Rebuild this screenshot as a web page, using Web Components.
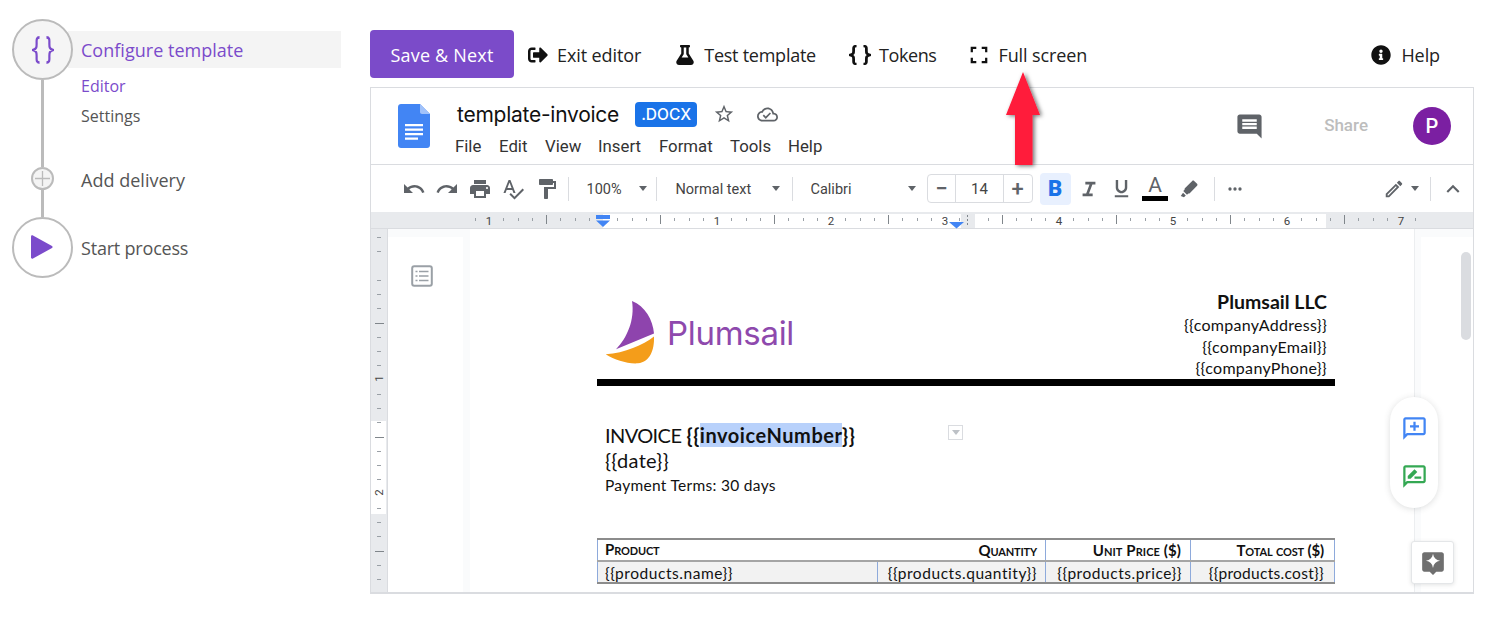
<!DOCTYPE html>
<html lang="en">
<head>
<meta charset="utf-8">
<title>Configure template</title>
<style>
  html, body { margin: 0; padding: 0; background: #fff; }
  body { width: 1500px; height: 623px; overflow: hidden; font-family: "Open Sans", "Liberation Sans", sans-serif; }
</style>
</head>
<body>
<app-shell>
  <flow-stepper slot="side">
    <flow-step kind="braces" size="big" active>
      <span slot="title">Configure template</span>
      <sub-link active>Editor</sub-link>
      <sub-link>Settings</sub-link>
    </flow-step>
    <flow-step kind="plus" size="small"><span slot="title">Add delivery</span></flow-step>
    <flow-step kind="play" size="big" last><span slot="title">Start process</span></flow-step>
  </flow-stepper>

  <top-bar slot="main">
    <save-button>Save &amp; Next</save-button>
    <tool-link icon="exit" style="margin-left:14px">Exit editor</tool-link>
    <tool-link icon="flask" style="margin-left:35px">Test template</tool-link>
    <tool-link icon="braces" style="margin-left:33px">Tokens</tool-link>
    <tool-link icon="full" style="margin-left:34px">Full screen</tool-link>
    <tool-link icon="info" style="margin-left:auto;margin-right:34px">Help</tool-link>
  </top-bar>

  <doc-frame slot="main">
    <doc-header slot="header"></doc-header>
    <doc-toolbar slot="toolbar"></doc-toolbar>
    <h-ruler slot="ruler"></h-ruler>
    <invoice-page slot="page"></invoice-page>
  </doc-frame>
</app-shell>
<red-arrow></red-arrow>

<script>
const ICONS = {
  exit: ['0 0 512 512', 'M497 273L329 441c-15 15-41 4.5-41-17v-96H152c-13.3 0-24-10.7-24-24v-96c0-13.3 10.7-24 24-24h136V88c0-21.4 25.9-32 41-17l168 168c9.3 9.4 9.3 24.6 0 34zM192 436v-40c0-6.6-5.4-12-12-12H96c-17.7 0-32-14.3-32-32V160c0-17.7 14.3-32 32-32h84c6.6 0 12-5.4 12-12V76c0-6.6-5.4-12-12-12H96c-53 0-96 43-96 96v192c0 53 43 96 96 96h84c6.6 0 12-5.4 12-12z'],
  flask: ['0 0 448 512', 'M437.2 403.5L320 215V64h8c13.3 0 24-10.7 24-24V24c0-13.3-10.7-24-24-24H120c-13.3 0-24 10.7-24 24v16c0 13.3 10.7 24 24 24h8v151L10.8 403.5C-18.5 450.6 15.3 512 70.9 512h306.2c55.7 0 89.4-61.5 60.1-108.5zM137.9 320l48.2-77.6c3.7-5.2 5.8-11.6 5.8-18.4V64h64v160c0 6.9 2.2 13.2 5.8 18.4l48.2 77.6h-172z'],
  info: ['0 0 512 512', 'M256 8C119.043 8 8 119.083 8 256c0 136.997 111.043 248 248 248s248-111.003 248-248C504 119.083 392.957 8 256 8zm0 110c23.196 0 42 18.804 42 42s-18.804 42-42 42-42-18.804-42-42 18.804-42 42-42zm56 254c0 6.627-5.373 12-12 12h-88c-6.627 0-12-5.373-12-12v-24c0-6.627 5.373-12 12-12h12v-64h-12c-6.627 0-12-5.373-12-12v-24c0-6.627 5.373-12 12-12h64c6.627 0 12 5.373 12 12v100h12c6.627 0 12 5.373 12 12v24z'],
  undo: ['0 0 24 24', 'M12.5 8c-2.65 0-5.05.99-6.9 2.6L2 7v9h9l-3.62-3.62c1.39-1.16 3.16-1.88 5.12-1.88 3.54 0 6.55 2.31 7.6 5.5l2.37-.78C21.08 11.03 17.15 8 12.5 8z'],
  redo: ['0 0 24 24', 'M18.4 10.6C16.55 8.99 14.15 8 11.5 8c-4.65 0-8.58 3.03-9.96 7.22L3.9 16c1.05-3.19 4.05-5.5 7.6-5.5 1.95 0 3.73.72 5.12 1.88L13 16h9V7l-3.6 3.6z'],
  print: ['0 0 24 24', 'M19 8H5c-1.66 0-3 1.34-3 3v6h4v4h12v-4h4v-6c0-1.66-1.34-3-3-3zm-3 11H8v-5h8v5zm3-7c-.55 0-1-.45-1-1s.45-1 1-1 1 .45 1 1-.45 1-1 1zm-1-9H6v4h12V3z'],
  spell: ['0 0 24 24', 'M12.45 16h2.09L9.43 3H7.57L2.46 16h2.09l1.12-3h5.64l1.14 3zm-6.02-5L8.5 5.48 10.57 11H6.43zm15.16.59l-8.09 8.09L9.83 16l-1.41 1.41 5.09 5.09L23 13l-1.41-1.41z'],
  paint: ['0 0 24 24', 'M18 4V3c0-.55-.45-1-1-1H5c-.55 0-1 .45-1 1v4c0 .55.45 1 1 1h12c.55 0 1-.45 1-1V6h1v4H9v11c0 .55.45 1 1 1h2c.55 0 1-.45 1-1v-9h8V4h-3z'],
  italic: ['0 0 24 24', 'M8 4v3h4.6L8.9 17H5v3h11v-3h-4l3.7-10H19V4z'],
  underline: ['0 0 24 24', 'M12 17c3.3 0 6-2.7 6-6V3h-2.5v8c0 1.9-1.6 3.5-3.5 3.5S8.500 12.900 8.500 11V3H6v8c0 3.300 2.700 6 6 6zM5 19v2h14v-2H5z'],
  marker: ['0 0 24 24', 'M20.800 6.400l-3.200-3.200c-.600-.600-1.500-.600-2.100 0L7.500 11.200c-.400.400-.500 1-.300 1.500l-1.500 1.500 4.100 4.100 1.500-1.500c.500.200 1.100.100 1.500-.300l8-8c.600-.600.600-1.500 0-2.100zM3 19.500l3.500 1.500 2-2-3-3z'],
  more: ['0 0 24 24', 'M6 10a2 2 0 1 0 0 4 2 2 0 0 0 0-4zm12 0a2 2 0 1 0 0 4 2 2 0 0 0 0-4zm-6 0a2 2 0 1 0 0 4 2 2 0 0 0 0-4z'],
  pencil: ['0 0 24 24', 'M3 17.250V21h3.750L17.810 9.940l-3.750-3.750L3 17.250zM5.920 19H5v-.920l9.060-9.060.920.920L5.920 19zM20.710 5.630l-2.340-2.340c-.200-.200-.450-.290-.710-.290s-.510.100-.700.290l-1.830 1.830 3.750 3.750 1.830-1.830c.390-.390.390-1.020 0-1.410z'],
  up: ['0 0 24 24', 'M12 8l-6 6 1.410 1.410L12 10.830l4.590 4.580L18 14z'],
  comment: ['0 0 24 24', 'M21.990 4c0-1.100-.890-2-1.990-2H4c-1.100 0-2 .900-2 2v12c0 1.100.900 2 2 2h14l4 4-.010-18zM18 14H6v-2h12v2zm0-3H6V9h12v2zm0-3H6V6h12v2z'],
  star: ['0 0 24 24', 'M22 9.240l-7.190-.620L12 2 9.190 8.630 2 9.240l5.460 4.730L5.820 21 12 17.270 18.180 21l-1.630-7.030L22 9.240zM12 15.400l-3.760 2.270 1-4.280-3.320-2.880 4.380-.380L12 6.100l1.710 4.040 4.380.380-3.320 2.880 1 4.280L12 15.400z'],
  cloud: ['0 0 24 24', 'M19.350 10.040C18.670 6.590 15.640 4 12 4 9.110 4 6.600 5.640 5.350 8.040 2.340 8.360 0 10.910 0 14c0 3.310 2.690 6 6 6h13c2.760 0 5-2.240 5-5 0-2.640-2.050-4.780-4.650-4.960zM19 18H6c-2.210 0-4-1.790-4-4 0-2.050 1.530-3.760 3.560-3.970l1.070-.110.500-.950C8.080 7.140 9.940 6 12 6c2.620 0 4.880 1.860 5.390 4.430l.300 1.500 1.530.110c1.560.100 2.780 1.410 2.780 2.960 0 1.650-1.350 3-3 3zm-9-3.820l-2.090-2.090L6.500 13.500 10 17l6.010-6.010-1.410-1.410z'],
  addcomment: ['0 0 24 24', 'M20 2H4c-1.100 0-2 .900-2 2v18l4-4h14c1.100 0 2-.900 2-2V4c0-1.100-.900-2-2-2zm0 14H5.170L4 17.170V4h16v12zm-9-2h2v-3h3V9h-3V6h-2v3H8v2h3z'],
  review: ['0 0 24 24', 'M20 2H4c-1.100 0-2 .900-2 2v18l4-4h14c1.100 0 2-.900 2-2V4c0-1.100-.900-2-2-2zm0 14H5.170L4 17.170V4h16v12zM6 14h2.500l6-6L12 5.500l-6 6V14zm6 0h6v-2h-6v2z'],
  spark: ['0 0 24 24', 'M20 2H4c-1.100 0-2 .900-2 2v14c0 1.100.900 2 2 2h5l3 3 3-3h5c1.100 0 2-.900 2-2V4c0-1.100-.900-2-2-2zm-8 14.500c-.600-3.700-2.800-5.900-6.500-6.500 3.700-.600 5.900-2.800 6.500-6.500.600 3.700 2.800 5.900 6.500 6.500-3.700.600-5.900 2.800-6.500 6.500z']
};

// stroked icons: the same shape is used in the stepper and in the top bar
const STROKED = {
  braces: ['2.500 2 19 20', 'M9 3C6 3 6.500 5 6.500 7.500S6.500 11 3.500 12c3 1 3 2 3 4.500S6 21 9 21M15 3c3 0 2.500 2 2.500 4.500s0 3.500 3 4.500c-3 1-3 2-3 4.500S18 21 15 21'],
  full: ['0 0 20 20', 'M2 7V2h5M13 2h5v5M18 13v5h-5M7 18H2v-5']
};

class UiIcon extends HTMLElement {
  connectedCallback() {
    const name = this.getAttribute('name');
    const w = this.getAttribute('w') || 24;
    const h = this.getAttribute('h') || w;
    const sw = this.getAttribute('sw') || 2.500;
    const root = this.attachShadow({mode: 'open'});
    let inner, box, fit = '';
    if (STROKED[name]) {
      box = STROKED[name][0];
      fit = 'preserveAspectRatio="none"';
      inner = `<path d="${STROKED[name][1]}" fill="none" stroke="currentColor" stroke-width="${sw}"/>`;
    } else {
      box = ICONS[name][0];
      inner = `<path d="${ICONS[name][1]}" fill="currentColor"/>`;
    }
    root.innerHTML = `<style>:host{display:inline-flex;flex:none;line-height:0}</style>
      <svg width="${w}" height="${h}" viewBox="${box}" ${fit}>${inner}</svg>`;
  }
}
customElements.define('ui-icon', UiIcon);

class AppShell extends HTMLElement {
  constructor() {
    super();
    this.attachShadow({mode: 'open'}).innerHTML = `<style>
      :host { display: flex; width: 1500px; height: 623px; box-sizing: border-box; }
      .side { width: 370px; flex: none; padding: 19px 0 0 12px; box-sizing: border-box; }
      .main { width: 1104px; flex: none; padding-top: 30px; display: flex; flex-direction: column; }
    </style>
    <div class="side"><slot name="side"></slot></div>
    <div class="main"><slot name="main"></slot></div>`;
  }
}
customElements.define('app-shell', AppShell);

class FlowStepper extends HTMLElement {
  constructor() {
    super();
    this.attachShadow({mode: 'open'}).innerHTML = `<style>
      :host { display: flex; flex-direction: column; width: 329px; color: #555; }
    </style><slot></slot>`;
  }
}
customElements.define('flow-stepper', FlowStepper);

class FlowStep extends HTMLElement {
  connectedCallback() {
    const kind = this.getAttribute('kind');
    const big = this.getAttribute('size') === 'big';
    const glyph = {
      braces: '<ui-icon name="braces" w="22" h="28" sw="1.900" style="color:#7b4bcb"></ui-icon>',
      play: '<svg width="26" height="28" viewBox="0 0 26 28" style="margin:-2px 3px 0 0"><path d="M3 3.500v21c0 1 1 1.500 2 1l19-10.500c.800-.500.800-1.500 0-2L5 2.500c-1-.500-2 0-2 1z" fill="#7b4bcb"/></svg>',
      plus: '<svg width="15" height="15" viewBox="0 0 15 15"><path d="M7.500 0v15M0 7.500h15" stroke="#bbb" stroke-width="1.300"/></svg>'
    }[kind];
    this.attachShadow({mode: 'open'}).innerHTML = `<style>
      :host { display: grid; grid-template-columns: 61px 1fr; }
      :host([active]) { height: 148px; }
      :host([kind=plus]) { height: 50px; }
      .rail { display: flex; flex-direction: column; align-items: center; }
      .node { flex: none; box-sizing: border-box; border-radius: 50%; border: 2.500px solid #bbb;
        display: flex; align-items: center; justify-content: center; background: #fff; position: relative; z-index: 1; }
      .big { width: 61px; height: 61px; }
      .small { width: 23px; height: 23px; border-width: 2px; background: #f4f4f4; }
      :host([active]) .node { background: #f5f5f5; }
      .line { flex: 1; width: 2.500px; background: #bbb; }
      :host([last]) .line { display: none; }
      .body { min-width: 0; }
      .title { display: flex; align-items: center; font-size: 18px; color: #555; padding-left: 8px; }
      :host([active]) .title { margin: 12px 0 0 -5px; padding-left: 13px; height: 37px; background: #f4f4f4; color: #7b4bcb; letter-spacing: .02px; }
      :host([kind=plus]) .title { height: 25px; margin-top: 0; letter-spacing: .02px; }
      :host([last]) .title { height: 61px; letter-spacing: -.2px; }
      .subs { padding: 3px 0 0 8px; display: flex; flex-direction: column; }
    </style>
    <div class="rail"><div class="node ${big ? 'big' : 'small'}">${glyph}</div><div class="line"></div></div>
    <div class="body">
      <div class="title"><slot name="title"></slot></div>
      <div class="subs"><slot></slot></div>
    </div>`;
  }
}
customElements.define('flow-step', FlowStep);

class SubLink extends HTMLElement {
  constructor() {
    super();
    this.attachShadow({mode: 'open'}).innerHTML = `<style>
      :host { display: block; height: 30px; line-height: 30px; font-size: 16px; color: #555; }
      :host([active]) { color: #7b4bcb; }
    </style><slot></slot>`;
  }
}
customElements.define('sub-link', SubLink);

class TopBar extends HTMLElement {
  constructor() {
    super();
    this.attachShadow({mode: 'open'}).innerHTML = `<style>
      :host { display: flex; align-items: center; height: 48px; margin-bottom: 9px; }
    </style><slot></slot>`;
  }
}
customElements.define('top-bar', TopBar);

class SaveButton extends HTMLElement {
  constructor() {
    super();
    this.attachShadow({mode: 'open'}).innerHTML = `<style>
      :host { display: flex; align-items: center; justify-content: center; box-sizing: border-box; width: 144px; height: 48px;
        padding-top: 1px; border-radius: 4px; background: #7b4bc9; color: #fff; font-size: 18px; letter-spacing: .2px; }
    </style><slot></slot>`;
  }
}
customElements.define('save-button', SaveButton);

class ToolLink extends HTMLElement {
  connectedCallback() {
    const icon = this.getAttribute('icon');
    const w = {braces: 22, flask: 18, full: 18}[icon] || 20;
    const h = icon === 'full' ? 18 : 20;
    const gap = {braces: 8, exit: 9}[icon] || 10;
    const sp = {flask: -.25, braces: -.4}[icon] || -.1;
    this.attachShadow({mode: 'open'}).innerHTML = `<style>
      :host { display: flex; align-items: center; gap: ${gap}px; font-size: 18px; letter-spacing: ${sp}px; color: #222; padding-top: 1px; }
      ui-icon { color: #111; }
    </style><ui-icon name="${icon}" w="${w}" h="${h}" sw="${icon === 'braces' ? 2.400 : 2.500}"></ui-icon><slot></slot>`;
  }
}
customElements.define('tool-link', ToolLink);

class DocFrame extends HTMLElement {
  constructor() {
    super();
    this.attachShadow({mode: 'open'}).innerHTML = `<style>
      :host { display: flex; flex-direction: column; box-sizing: border-box; height: 507px;
        border: 1px solid #dadce0; border-bottom-width: 2px; background: #fff; overflow: hidden;
        font-family: Roboto, "Liberation Sans", sans-serif; }
    </style>
    <slot name="header"></slot><slot name="toolbar"></slot><slot name="ruler"></slot><slot name="page"></slot>`;
  }
}
customElements.define('doc-frame', DocFrame);

class DocHeader extends HTMLElement {
  constructor() {
    super();
    this.attachShadow({mode: 'open'}).innerHTML = `<style>
      :host { display: flex; align-items: center; height: 76px; box-sizing: content-box;
        border-bottom: 1px solid #dadce0; padding-left: 27px; }
      .titles { margin-left: 27px; padding-top: 6px; }
      .row { display: flex; align-items: center; height: 28px; }
      .name { font: 400 21px Inter, "Open Sans", sans-serif; letter-spacing: -.25px; color: #111; margin-right: 16px; }
      .chip { width: 62px; height: 25px; border-radius: 4px; background: #1a73e8; color: #fff; margin-top: 1px;
        font: 500 15.500px Inter, Roboto, sans-serif; display: flex; align-items: center; justify-content: center; }
      .row ui-icon { color: #5f6368; }
      .menu { display: flex; font-size: 16.800px; color: #333; margin: 6px 0 0 -2px; height: 24px; line-height: 24px; }
      .right { margin-left: auto; display: flex; align-items: center; padding-right: 22px; color: #5f6368; }
      .share { font-weight: 500; font-size: 17px; color: #bdbdbd; margin: -2px 45px 0 60px; }
      .avatar { width: 38px; height: 38px; border-radius: 50%; background: #7b1fa2; color: #fff; font-size: 20px; font-weight: 500;
        display: flex; align-items: center; justify-content: center; }
    </style>
    <svg width="32" height="44" viewBox="0 0 32 44">
      <path d="M3 0h19l10 10v31c0 1.700-1.300 3-3 3H3c-1.700 0-3-1.300-3-3V3c0-1.700 1.300-3 3-3z" fill="#4285f4"/>
      <path d="M22 0l10 10h-8c-1.100 0-2-.900-2-2z" fill="#a1c2fa"/>
      <path d="M7 20h18v2.200H7zM7 24.500h18v2.200H7zM7 29h18v2.200H7zM7 33.500h13v2.200H7z" fill="#fff"/>
    </svg>
    <div class="titles">
      <div class="row">
        <span class="name">template-invoice</span><span class="chip">.DOCX</span>
        <ui-icon name="star" w="22" style="margin-left:16px"></ui-icon>
        <ui-icon name="cloud" w="21" style="margin-left:22px"></ui-icon>
      </div>
      <div class="menu">
        <span style="width:44px">File</span><span style="width:46px">Edit</span><span style="width:53px">View</span><span style="width:61px">Insert</span><span style="width:71px">Format</span><span style="width:58px">Tools</span><span>Help</span>
      </div>
    </div>
    <div class="right">
      <ui-icon name="comment" w="29"></ui-icon>
      <span class="share">Share</span>
      <div class="avatar">P</div>
    </div>`;
  }
}
customElements.define('doc-header', DocHeader);

class ToolBtn extends HTMLElement {
  connectedCallback() {
    const w = this.getAttribute('w') || 33;
    this.attachShadow({mode: 'open'}).innerHTML = `<style>
      :host { display: flex; align-items: center; justify-content: center; width: ${w}px; height: 32px; flex: none; color: #5f6368; font-size: 16px; }
      :host([on]) { background: #e8f0fe; color: #1a73e8; border-radius: 4px; font-weight: 900; font-size: 22px; }
    </style><slot></slot>`;
  }
}
customElements.define('tool-btn', ToolBtn);

class ToolSelect extends HTMLElement {
  connectedCallback() {
    const w = this.getAttribute('w');
    this.attachShadow({mode: 'open'}).innerHTML = `<style>
      :host { display: flex; align-items: center; justify-content: space-between; width: ${w}px; flex: none; font-size: 14.500px; color: #444; }
      span { padding-top: 1px; }
      i { width: 0; height: 0; border: 4.500px solid transparent; border-top: 5px solid #5f6368; border-bottom: 0; }
    </style><span><slot></slot></span><i></i>`;
  }
}
customElements.define('tool-select', ToolSelect);

class ToolSep extends HTMLElement {
  constructor() {
    super();
    this.attachShadow({mode: 'open'}).innerHTML = `<style>
      :host { display: block; width: 1px; height: 24px; flex: none; background: #dadce0; }
    </style>`;
  }
}
customElements.define('tool-sep', ToolSep);

class DocToolbar extends HTMLElement {
  constructor() {
    super();
    this.attachShadow({mode: 'open'}).innerHTML = `<style>
      :host { display: flex; align-items: center; height: 47px; padding-left: 26.500px; color: #5f6368; }
      .size { display: flex; box-sizing: border-box; width: 106px; height: 29px; border: 1px solid #dadce0; border-radius: 4px;
        margin: 0 7px 0 11px; flex: none; align-items: center; font-size: 15px; color: #444; }
      .size span { display: flex; align-items: center; justify-content: center; height: 100%; box-sizing: border-box; }
      .size .b { width: 28px; font-size: 22px; font-weight: 500; color: #5f6368; }
      .size .n { width: 49px; border-left: 1px solid #dadce0; border-right: 1px solid #dadce0; }
      .color { flex-direction: column; gap: 0; font-size: 21px; }
      .color b { display: block; width: 26px; height: 5px; background: #000; margin-top: 1px; }
      .color span { line-height: 19px; }
    </style>
    <tool-btn><ui-icon name="undo" w="24"></ui-icon></tool-btn>
    <tool-btn><ui-icon name="redo" w="24"></ui-icon></tool-btn>
    <tool-btn><ui-icon name="print" w="24"></ui-icon></tool-btn>
    <tool-btn><ui-icon name="spell" w="24"></ui-icon></tool-btn>
    <tool-btn style="margin-left:.500px"><ui-icon name="paint" w="24"></ui-icon></tool-btn>
    <tool-sep style="margin:0 18px 0 4.500px"></tool-sep>
    <tool-select w="60">100%</tool-select>
    <tool-sep style="margin:0 19px 0 9px"></tool-sep>
    <tool-select w="104">Normal text</tool-select>
    <tool-sep style="margin:0 18px 0 12px"></tool-sep>
    <tool-select w="105">Calibri</tool-select>
    <div class="size"><span class="b">&minus;</span><span class="n">14</span><span class="b">+</span></div>
    <tool-btn w="31" on>B</tool-btn>
    <tool-btn style="margin-left:1.500px"><ui-icon name="italic" w="22"></ui-icon></tool-btn>
    <tool-btn><ui-icon name="underline" w="23"></ui-icon></tool-btn>
    <tool-btn w="34" class="color"><span>A</span><b></b></tool-btn>
    <tool-btn><ui-icon name="marker" w="22"></ui-icon></tool-btn>
    <tool-sep style="margin:0 4px 0 8.500px"></tool-sep>
    <tool-btn><ui-icon name="more" w="20"></ui-icon></tool-btn>
    <tool-btn style="margin-left:auto" w="26"><ui-icon name="pencil" w="22"></ui-icon></tool-btn>
    <tool-select w="9" style="margin:0 11px 0 3px"></tool-select>
    <tool-sep style="margin-right:5px"></tool-sep>
    <tool-btn w="34" style="margin-right:3px"><ui-icon name="up" w="26"></ui-icon></tool-btn>`;
  }
}
customElements.define('doc-toolbar', DocToolbar);

// ruler: x is a page coordinate minus 371, one inch is 114px, 1/8 inch a tick
class HRuler extends HTMLElement {
  connectedCallback() {
    const zero = 232;
    let marks = '';
    for (let i = -13; i <= 63; i++) {
      const x = zero + i * 14.250;
      if (x < 100 || x > 1045) continue;
      if (i % 8 === 0) {
        if (i !== 0) marks += `<text x="${x}" y="12.500" text-anchor="middle" font-size="11.500" fill="#444">${Math.abs(i / 8)}</text>`;
      } else if (((i % 8) + 8) % 8 === 4) {
        marks += `<rect x="${Math.round(x)}" y="3" width="1" height="9" fill="#80868b"/>`;
      } else {
        marks += `<rect x="${Math.round(x)}" y="6" width="1" height="3" fill="#9aa0a6"/>`;
      }
    }
    this.attachShadow({mode: 'open'}).innerHTML = `<style>
      :host { display: block; height: 17px; flex: none; font-family: Roboto, sans-serif; line-height: 0; }
    </style>
    <svg width="1102" height="17" viewBox="0 0 1102 17">
      <rect width="1102" height="17" fill="#e8eaed"/>
      <rect x="232" y="2" width="723" height="14" fill="#fff"/>
      <rect y="0" width="1102" height="1" fill="#e8eaed"/>
      <rect y="16" width="1102" height="1" fill="#dadce0"/>
      ${marks}
      <rect x="590" y="2" width="14" height="14" fill="#e8eaed"/>
      <rect x="225" y="3" width="14" height="4" fill="#4285f4"/>
      <path d="M225 8.500h14l-7 6.500z" fill="#4285f4"/>
      <path d="M578 10h15l-7.500 6.500z" fill="#4285f4"/>
      <path d="M596.500 3v11" stroke="#80868b" stroke-dasharray="2 2"/>
    </svg>`;
  }
}
customElements.define('h-ruler', HRuler);

class VRuler extends HTMLElement {
  connectedCallback() {
    let marks = '';
    for (let i = 0; i <= 24; i++) {
      const y = 8 + i * 14.250;
      if (i === 2) continue;
      if (i % 8 === 2) {
        const n = (i - 2) / 8;
        marks += `<text transform="translate(12 ${y - 1}) rotate(-90)" text-anchor="middle" font-size="11.500" fill="#444">${n}</text>`;
      } else if (i % 8 === 6) {
        marks += `<rect x="4" y="${Math.round(y)}" width="9" height="1" fill="#80868b"/>`;
      } else {
        marks += `<rect x="6" y="${Math.round(y)}" width="4" height="1" fill="#9aa0a6"/>`;
      }
    }
    this.attachShadow({mode: 'open'}).innerHTML = `<style>
      :host { display: block; width: 17px; flex: none; font-family: Roboto, sans-serif; line-height: 0; }
    </style>
    <svg width="17" height="364" viewBox="0 0 17 364">
      <rect width="17" height="364" fill="#e8eaed"/>
      <rect y="192" width="15" height="93" fill="#fff"/>
      <rect x="16" width="1" height="364" fill="#dadce0"/>
      ${marks}
    </svg>`;
  }
}
customElements.define('v-ruler', VRuler);

class InvoiceTable extends HTMLElement {
  constructor() {
    super();
    this.attachShadow({mode: 'open'}).innerHTML = `<style>
      :host { display: block; width: 738px; font-family: Lato, "Open Sans", sans-serif; color: #111; }
      table { border-collapse: collapse; width: 737px; table-layout: fixed; }
      td, th { height: 22px; padding: 0 8px 0 7px; text-align: right; white-space: nowrap; box-sizing: border-box;
        border-left: 1px solid #8eaadb; border-right: 1px solid #8eaadb; }
      th { font-variant: small-caps; font-size: 15px; letter-spacing: -.15px; border-top: 2px solid #8c8c8c; border-bottom: 2px solid #a5a5a5; }
      td { background: #f2f2f2; border-bottom: 2px solid #8c8c8c; font-size: 15.500px; letter-spacing: .55px; padding-top: 1px; }
      .l { text-align: left; }
      .in { border-left: 1px solid #a5a5a5; border-right: 1px solid #8eaadb; }
      .q { text-align: right; float: right; }
      th span.q { line-height: 20px; }
      .u { padding-right: 9px; letter-spacing: .1px; }
      .t { padding-right: 10px; }
    </style>
    <table>
      <colgroup><col style="width:280px"><col style="width:168px"><col style="width:145px"><col style="width:144px"></colgroup>
      <tr><th colspan="2" class="l">Product<span class="q">Quantity</span></th><th class="u">Unit Price ($)</th><th class="t">Total cost ($)</th></tr>
      <tr><td class="l">{{products.name}}</td><td class="in">{{products.quantity}}</td><td>{{products.price}}</td><td class="t" style="letter-spacing:.3px">{{products.cost}}</td></tr>
    </table>`;
  }
}
customElements.define('invoice-table', InvoiceTable);

class InvoicePage extends HTMLElement {
  constructor() {
    super();
    this.attachShadow({mode: 'open'}).innerHTML = `<style>
      :host { display: flex; flex: 1; min-height: 0; position: relative; overflow: hidden; }
      .gutter { width: 82px; flex: none; box-sizing: border-box; background: #fafbfc; padding: 8px 7px 0 0; }
      .gutter-in { height: 100%; background: #fff; display: flex; justify-content: center; padding: 28px 8px 0 0; box-sizing: border-box; }
      .paper { width: 944px; flex: none; box-sizing: border-box; padding: 60px 79px 0 127px; background: #fff;
        font-family: Lato, "Open Sans", sans-serif; color: #111; }
      .right { flex: 1; box-sizing: border-box; border-left: 1px solid #eceef0; background: #fafbfc; padding: 8px 0 0 6px; }
      .right-in { height: 100%; background: #fff; padding: 15px 3px 0 40px; box-sizing: border-box; }
      .thumb { width: 10px; height: 88px; border-radius: 5px; background: #dadce0; }
      .head { display: flex; justify-content: space-between; height: 90px; padding: 0 8px 0 9px; }
      .logo { display: flex; align-items: flex-start; padding-top: 11px; margin-left: -1px; }
      .brand { font: 400 33px Inter, Lato, sans-serif; color: #8e49ad; margin: 13px 0 0 12px; letter-spacing: -.3px; }
      .co { text-align: right; font-size: 16px; letter-spacing: .3px; line-height: 21.500px; padding-top: 1px; }
      .co b { display: block; font-size: 19.500px; line-height: 24px; letter-spacing: 0; }
      .rule { height: 7px; background: #000; }
      .inv { padding: 36px 0 0 8px; position: relative; }
      .l1 { font-size: 20px; line-height: 26px; }
      .l1 .w { letter-spacing: -.6px; }
      .l1 b { letter-spacing: .55px; }
      .l2 { font-size: 20px; line-height: 25px; letter-spacing: .3px; }
      .l3 { font-size: 15.500px; line-height: 22px; letter-spacing: .3px; padding-top: 1px; }
      mark { background: #b8d1fb; color: inherit; }
      invoice-table { margin-top: 42px; }
      .drop { position: absolute; left: 351px; top: 39px; box-sizing: border-box; width: 15px; height: 15px; border: 1px solid #dadce0;
        display: flex; align-items: center; justify-content: center; }
      .drop i { width: 0; height: 0; border: 4.500px solid transparent; border-top: 5px solid #bdc1c6; border-bottom: 0; }
      .pill { position: absolute; left: 1019px; top: 168px; width: 48px; height: 111px; border-radius: 24px; background: #fff;
        box-shadow: 0 1px 6px rgba(60,64,67,.18); display: flex; flex-direction: column; align-items: center; justify-content: center; gap: 21px; }
      .fab { position: absolute; left: 1040px; top: 312px; box-sizing: border-box; width: 43px; height: 43px; border-radius: 3px; background: #fff;
        border: 1px solid #e4e6e8; box-shadow: 0 1px 4px rgba(60,64,67,.15); display: flex; align-items: center; justify-content: center; color: #6f6f6f; }
    </style>
    <v-ruler></v-ruler>
    <div class="gutter"><div class="gutter-in"><svg width="22" height="22" viewBox="0 0 22 22">
      <rect x="1.200" y="1.200" width="19.600" height="19.600" rx="2" fill="none" stroke="#9aa0a6" stroke-width="2"/>
      <path d="M4.500 6.500h2M8 6.500h9.500M4.500 11h2M8 11h9.500M4.500 15.500h2M8 15.500h9.500" stroke="#9aa0a6" stroke-width="1.600"/>
    </svg></div></div>
    <div class="paper">
      <div class="head">
        <div class="logo">
          <svg width="50" height="65" viewBox="0 0 50 65">
            <path d="M27 1C40 6 48 20 49 33.500L11 49.300C22 38 30 20 27 1z" fill="#8e44ad"/>
            <path d="M.7 54.300C20 53 38 45 49 36.500 49.500 50 45 62 33 63.300 22 64 10 60 .7 54.300z" fill="#f49d1a"/>
          </svg>
          <span class="brand">Plumsail</span>
        </div>
        <div class="co"><b>Plumsail LLC</b>{{companyAddress}}<br>{{companyEmail}}<br>{{companyPhone}}</div>
      </div>
      <div class="rule"></div>
      <div class="inv">
        <div class="l1"><span class="w">INVOICE</span> <b>{{<mark>invoiceNumber</mark>}}</b></div>
        <div class="l2">{{date}}</div>
        <div class="l3">Payment Terms: 30 days</div>
        <div class="drop"><i></i></div>
      </div>
      <invoice-table></invoice-table>
    </div>
    <div class="right"><div class="right-in"><div class="thumb"></div></div></div>
    <div class="pill">
      <ui-icon name="addcomment" w="27" style="color:#4285f4"></ui-icon>
      <ui-icon name="review" w="27" style="color:#34a853"></ui-icon>
    </div>
    <div class="fab"><ui-icon name="spark" w="26"></ui-icon></div>`;
  }
}
customElements.define('invoice-page', InvoicePage);

class RedArrow extends HTMLElement {
  constructor() {
    super();
    this.attachShadow({mode: 'open'}).innerHTML = `<style>
      :host { position: absolute; left: 1000px; top: 68px; width: 50px; height: 104px; line-height: 0; }
    </style>
    <svg width="50" height="104" viewBox="0 0 50 104">
      <defs><filter id="s" x="-30%" y="-10%" width="160%" height="120%"><feDropShadow dx="2" dy="1" stdDeviation="2" flood-color="#000" flood-opacity=".55"/></filter></defs>
      <path d="M23 4L40 47H32.500V97H15V47H6z" fill="#ff1a3a" filter="url(#s)"/>
    </svg>`;
  }
}
customElements.define('red-arrow', RedArrow);
</script>
</body>
</html>
